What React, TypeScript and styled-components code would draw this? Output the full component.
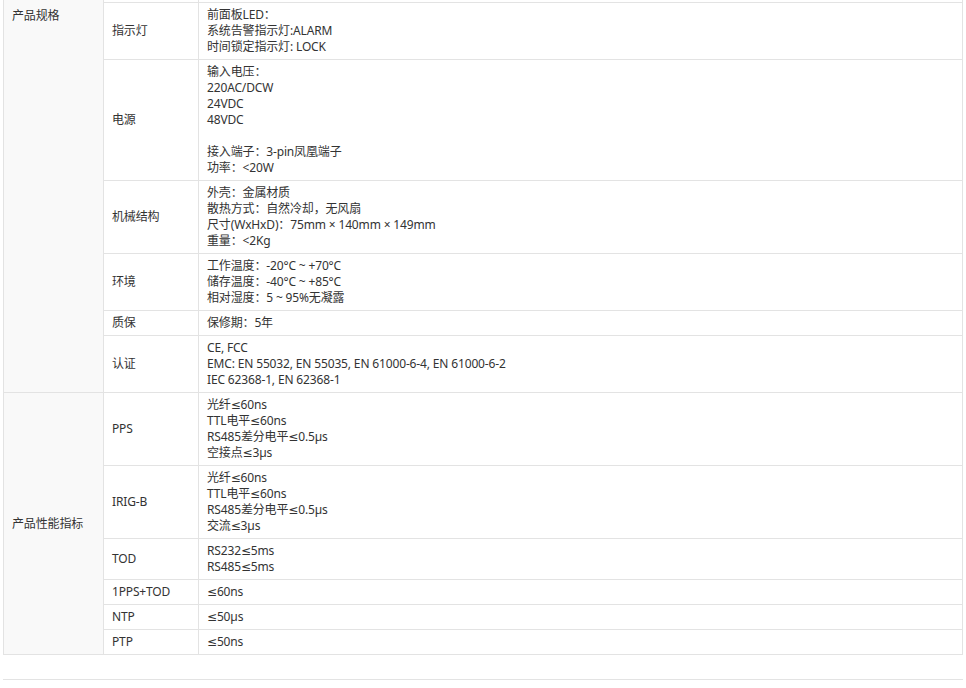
import styled, { createGlobalStyle } from "styled-components";

type SpecRow = {
  name: string;
  lines: string[];
};

type SpecGroup = {
  title: string;
  rows: SpecRow[];
  top?: boolean;
};

const groups: SpecGroup[] = [
  {
    title: "产品规格",
    top: true,
    rows: [
      { name: "指示灯", lines: ["前面板LED：", "系统告警指示灯:ALARM", "时间锁定指示灯: LOCK"] },
      {
        name: "电源",
        lines: ["输入电压：", "220AC/DCW", "24VDC", "48VDC", "", "接入端子：3-pin凤凰端子", "功率：<20W"],
      },
      {
        name: "机械结构",
        lines: ["外壳：金属材质", "散热方式：自然冷却，无风扇", "尺寸(WxHxD)：75mm × 140mm × 149mm", "重量：<2Kg"],
      },
      { name: "环境", lines: ["工作温度：-20°C ~ +70°C", "储存温度：-40°C ~ +85°C", "相对湿度：5 ~ 95%无凝露"] },
      { name: "质保", lines: ["保修期：5年"] },
      {
        name: "认证",
        lines: ["CE, FCC", "EMC: EN 55032, EN 55035, EN 61000-6-4, EN 61000-6-2", "IEC 62368-1, EN 62368-1"],
      },
    ],
  },
  {
    title: "产品性能指标",
    rows: [
      { name: "PPS", lines: ["光纤≤60ns", "TTL电平≤60ns", "RS485差分电平≤0.5µs", "空接点≤3µs"] },
      { name: "IRIG-B", lines: ["光纤≤60ns", "TTL电平≤60ns", "RS485差分电平≤0.5µs", "交流≤3µs"] },
      { name: "TOD", lines: ["RS232≤5ms", "RS485≤5ms"] },
      { name: "1PPS+TOD", lines: ["≤60ns"] },
      { name: "NTP", lines: ["≤50µs"] },
      { name: "PTP", lines: ["≤50ns"] },
    ],
  },
];

const App = () => {
  return (
    <>
      <GlobalStyle />
      <Page>
        <SpecTable>
          <colgroup>
            <col style={{ width: 100 }} />
            <col style={{ width: 95 }} />
            <col />
          </colgroup>
          <tbody>
            <tr>
              <GroupCell rowSpan={groups[0].rows.length + 1} $top>
                {groups[0].title}
              </GroupCell>
              <SliverCell />
              <SliverCell />
            </tr>
            {groups.map((group) =>
              group.rows.map((row, index) => (
                <tr key={group.title + row.name}>
                  {index === 0 && !group.top && (
                    <GroupCell rowSpan={group.rows.length}>{group.title}</GroupCell>
                  )}
                  <Cell>{row.name}</Cell>
                  <Cell>
                    {row.lines.map((line, i) => (
                      <Line key={i}>{line || "\u00a0"}</Line>
                    ))}
                  </Cell>
                </tr>
              ))
            )}
          </tbody>
        </SpecTable>
        <Divider />
      </Page>
    </>
  );
};

export default App;

const GlobalStyle = createGlobalStyle`
  html, body {
    margin: 0;
    padding: 0;
    background: #fff;
  }
  body {
    font-family: "Noto Sans", "DejaVu Sans", "Noto Sans CJK SC", sans-serif;
    font-size: 12px;
    color: #333;
  }
`;

const Page = styled.div`
  width: 966px;
  padding-left: 3px;
  box-sizing: border-box;
`;

const SpecTable = styled.table`
  width: 960px;
  border-collapse: collapse;
  table-layout: fixed;
`;

const Cell = styled.td`
  border: 1px solid #e3e3e3;
  padding: 4px 8px;
  line-height: 16px;
  font-size: 12px;
  letter-spacing: -0.15px;
  color: #333;
  vertical-align: middle;
`;

const SliverCell = styled(Cell)`
  border-top: none;
  padding: 0;
  height: 2px;
`;

const GroupCell = styled(Cell)<{ $top?: boolean }>`
  background: #f9f9f9;
  vertical-align: ${(p) => (p.$top ? "top" : "middle")};
  padding-top: ${(p) => (p.$top ? "8px" : "4px")};
  border-top: ${(p) => (p.$top ? "none" : "1px solid #e3e3e3")};
`;

const Line = styled.div`
  white-space: nowrap;
`;

const Divider = styled.div`
  width: 960px;
  height: 1px;
  background: #e3e3e3;
  margin-top: 24px;
`;
